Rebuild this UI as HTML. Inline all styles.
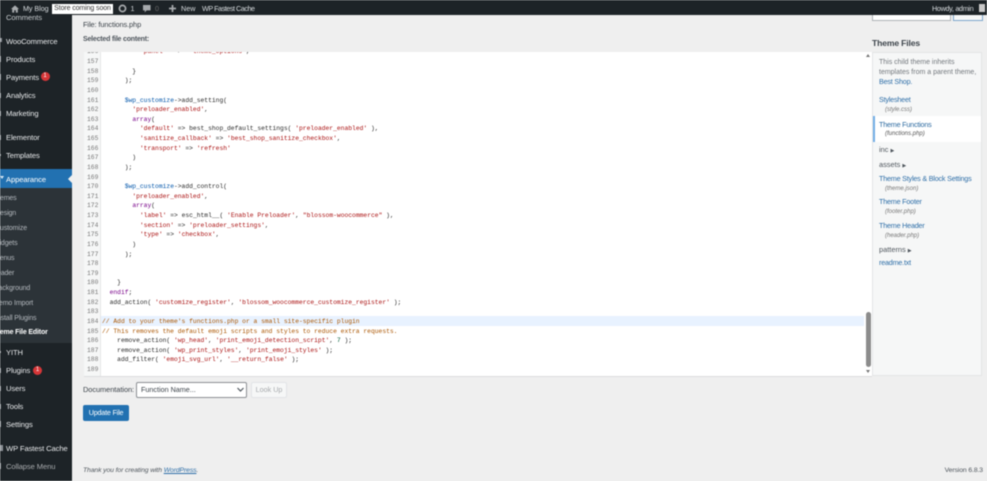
<!DOCTYPE html>
<html lang="en"><head><meta charset="utf-8"><title>Edit Themes</title>
<style>
html,body{margin:0;padding:0;width:987px;height:481px;overflow:hidden;background:#efefef}
#w{position:relative;width:987px;height:481px;overflow:hidden;background:#efefef;filter:blur(.45px);font-family:"Liberation Sans",sans-serif;font-size:8.3px;color:#3c434a}
#w div,#w svg{position:absolute}
.t{white-space:nowrap;line-height:10px}
.m{color:#e6e8ea;font-size:7.6px;letter-spacing:-.1px;left:6px;margin-top:.6px}
.s{color:#b4b9be;font-size:7px;letter-spacing:-.12px}
.l{color:#2f6fa8;left:879px;font-size:7.2px;letter-spacing:-.2px}
.f{color:#777;left:885px;font-size:6px;font-style:italic}
.g{color:#50575e;left:879px;font-size:7.4px}
.tb{color:#d5d9dc;font-size:7.2px;top:4px}
pre{margin:0;font-family:"Liberation Mono",monospace;font-size:6.32px;line-height:9.625px;position:absolute;color:#2a2a2a}
.k{color:#770088}.st{color:#aa1111}.v{color:#0055aa}.c{color:#aa5500}.n{color:#116644}
.ic{background:#8d9297}
</style></head><body><div id="w">

<!-- sidebar -->
<div style="left:0;top:0;width:72px;height:481px;background:#1d2327"></div>
<div style="left:0;top:187px;width:72px;height:156px;background:#2c3338"></div>
<div style="left:0;top:169px;width:72px;height:19px;background:#2271b1"></div>
<div style="left:68px;top:175px;width:0;height:0;border:4px solid transparent;border-right-color:#efefef;border-left:0"></div>

<div class="t m" style="top:12.5px;color:#c6cacd">Comments</div>
<div class="t m" style="top:36px">WooCommerce</div>
<div class="t m" style="top:54px">Products</div>
<div class="t m" style="top:72px">Payments</div>
<div style="left:40.500px;top:72.200px;width:9px;height:9px;border-radius:50%;background:#d63638;color:#fff;font-size:6px;line-height:9px;text-align:center">1</div>
<div class="t m" style="top:90px">Analytics</div>
<div class="t m" style="top:108px">Marketing</div>
<div class="t m" style="top:132px">Elementor</div>
<div class="t m" style="top:150px">Templates</div>
<div class="t m" style="top:174px;color:#fff">Appearance</div>

<div class="t s" style="top:194px;left:-8px">Themes</div>
<div class="t s" style="top:209px;left:-5px">Design</div>
<div class="t s" style="top:224px;left:-5px">Customize</div>
<div class="t s" style="top:239px;left:-7px">Widgets</div>
<div class="t s" style="top:254px;left:-6px">Menus</div>
<div class="t s" style="top:268.500px;left:-8px">Header</div>
<div class="t s" style="top:284px;left:-6px">Background</div>
<div class="t s" style="top:299px;left:-6px">Demo Import</div>
<div class="t s" style="top:313.500px;left:-5px">Install Plugins</div>
<div class="t s" style="top:328px;left:-8.500px;color:#fff;font-weight:bold;letter-spacing:-.15px">Theme File Editor</div>

<div class="t m" style="top:347px">YITH</div>
<div class="t m" style="top:365px">Plugins</div>
<div style="left:33px;top:366px;width:9px;height:9px;border-radius:50%;background:#d63638;color:#fff;font-size:6px;line-height:9px;text-align:center">1</div>
<div class="t m" style="top:383px">Users</div>
<div class="t m" style="top:401px">Tools</div>
<div class="t m" style="top:419px">Settings</div>
<div class="t m" style="top:443px">WP Fastest Cache</div>
<div class="t m" style="top:461px;color:#a7aaad">Collapse Menu</div>

<!-- clipped menu icons -->
<div class="ic" style="left:0;top:38px;width:2px;height:4px"></div>
<div class="ic" style="left:0;top:56px;width:1px;height:6px"></div>
<div class="ic" style="left:0;top:74px;width:1px;height:6px"></div>
<div class="ic" style="left:0;top:93px;width:1px;height:5px"></div>
<div class="ic" style="left:0;top:111px;width:1px;height:5px"></div>
<div class="ic" style="left:0;top:135px;width:1px;height:5px"></div>
<div class="ic" style="left:0;top:154px;width:1px;height:2px"></div>
<div style="left:0;top:176px;width:0;height:0;border:2px solid transparent;border-top:3px solid #dbe8f3;border-bottom:0"></div>
<div class="ic" style="left:0;top:351px;width:1px;height:2px"></div>
<div class="ic" style="left:0;top:368px;width:1px;height:5px"></div>
<div class="ic" style="left:0;top:386px;width:1px;height:5px"></div>
<div class="ic" style="left:0;top:404px;width:1px;height:5px"></div>
<div class="ic" style="left:0;top:421px;width:1px;height:6px"></div>
<div class="ic" style="left:0;top:445px;width:3px;height:6px"></div>
<div class="ic" style="left:0;top:463px;width:1px;height:6px"></div>

<!-- top right controls -->
<div style="left:872px;top:15px;width:77px;height:5px;background:#fff;border:1px solid #aeb2b6;border-top:0"></div>
<div style="left:953px;top:15px;width:28px;height:5px;background:#f6f7f7;border:1px solid #7da6cc;border-top:0"></div>

<!-- top bar -->
<div style="left:0;top:0;width:987px;height:15px;background:#1d2327"></div>
<svg style="left:11px;top:5px" width="8" height="8" viewBox="0 0 10 9"><path d="M5 0 0 4.500h1.500V9h2.500V6h2v3h2.500V4.500H10z" fill="#a7aaad"/></svg>
<div class="t tb" style="left:23px;letter-spacing:-.05px">My Blog</div>
<div style="left:52px;top:4px;width:61px;height:9.500px;background:#fff;color:#333;font-size:7px;letter-spacing:-.1px;line-height:9.500px;text-align:center;white-space:nowrap">Store coming soon</div>
<svg style="left:118px;top:4px" width="9" height="9" viewBox="0 0 9 9"><circle cx="4.500" cy="4.500" r="3.100" fill="none" stroke="#a7aaad" stroke-width="1.700"/></svg>
<div class="t tb" style="left:130.500px">1</div>
<svg style="left:143px;top:5px" width="8" height="8" viewBox="0 0 9 9"><path d="M0 0h8.500v6H4L2 8.500V6H0z" fill="#a7aaad"/></svg>
<div class="t tb" style="left:155px;color:#666">0</div>
<svg style="left:169px;top:5px" width="7" height="7" viewBox="0 0 8 8"><path d="M3 0h2v3h3v2H5v3H3V5H0V3h3z" fill="#a7aaad"/></svg>
<div class="t tb" style="left:181px">New</div>
<div class="t tb" style="left:202px;letter-spacing:-.45px">WP Fastest Cache</div>
<div class="t tb" style="left:932px;letter-spacing:-.3px">Howdy, admin</div>
<div style="left:979px;top:4px;width:6px;height:8px;background:#c9c9c9"></div>

<!-- header labels -->
<div class="t" style="left:83px;top:19.500px;font-size:7.400px;letter-spacing:-.1px;color:#3c434a">File: functions.php</div>
<div class="t" style="left:83px;top:34.500px;font-size:7px;letter-spacing:-.2px;color:#50575e;font-weight:bold">Selected file content:</div>

<!-- editor -->
<div style="left:84px;top:52px;width:788px;height:324px;background:#fff;overflow:hidden;border-bottom:1px solid #dcdcde">
<div style="left:0;top:0;width:16px;height:324px;background:#f6f7f7;border-right:1px solid #e6e6e6"></div>
<div style="left:17px;top:264px;width:763px;height:10px;background:#e8f2ff"></div>
<pre style="left:3px;top:-4.600px;color:#777">156
157
158
159
160
161
162
163
164
165
166
167
168
169
170
171
172
173
174
175
176
177
178
179
180
181
182
183
184
185
186
187
188
189</pre>
<pre style="left:18px;top:-4.600px">          <span class="st">'panel'</span>  =&gt;  <span class="st">'theme_options'</span>,

        }
      );

      <span class="v">$wp_customize</span>-&gt;add_setting(
        <span class="st">'preloader_enabled'</span>,
        <span class="k">array</span>(
          <span class="st">'default'</span> =&gt; best_shop_default_settings( <span class="st">'preloader_enabled'</span> ),
          <span class="st">'sanitize_callback'</span> =&gt; <span class="st">'best_shop_sanitize_checkbox'</span>,
          <span class="st">'transport'</span> =&gt; <span class="st">'refresh'</span>
        )
      );

      <span class="v">$wp_customize</span>-&gt;add_control(
        <span class="st">'preloader_enabled'</span>,
        <span class="k">array</span>(
          <span class="st">'label'</span> =&gt; esc_html__( <span class="st">'Enable Preloader'</span>, <span class="st">"blossom-woocommerce"</span> ),
          <span class="st">'section'</span> =&gt; <span class="st">'preloader_settings'</span>,
          <span class="st">'type'</span> =&gt; <span class="st">'checkbox'</span>,
        )
      );


    }
  <span class="k">endif</span>;
  add_action( <span class="st">'customize_register'</span>, <span class="st">'blossom_woocommerce_customize_register'</span> );

<span class="c">// Add to your theme's functions.php or a small site-specific plugin</span>
<span class="c">// This removes the default emoji scripts and styles to reduce extra requests.</span>
    remove_action( <span class="st">'wp_head'</span>, <span class="st">'print_emoji_detection_script'</span>, <span class="n">7</span> );
    remove_action( <span class="st">'wp_print_styles'</span>, <span class="st">'print_emoji_styles'</span> );
    add_filter( <span class="st">'emoji_svg_url'</span>, <span class="st">'__return_false'</span> );
</pre>
</div>

<!-- scrollbar -->
<div style="left:866px;top:312px;width:5px;height:55px;border-radius:3px;background:#8c8c8c"></div>
<div style="left:866px;top:54px;width:0;height:0;border:2.500px solid transparent;border-bottom:3px solid #777;border-top:0"></div>
<div style="left:866px;top:370px;width:0;height:0;border:2.500px solid transparent;border-top:3px solid #777;border-bottom:0"></div>

<!-- theme files -->
<div class="t" style="left:872px;top:38px;font-size:8.600px;letter-spacing:-.15px;font-weight:bold;color:#3c434a">Theme Files</div>
<div style="left:872px;top:52px;width:110px;height:324px;background:#f6f7f7;border:1px solid #e4e5e6;box-sizing:border-box"></div>
<div class="t" style="left:879px;top:58px;font-size:7px;color:#72777c">This child theme inherits</div>
<div class="t" style="left:879px;top:67.500px;font-size:7px;color:#72777c">templates from a parent theme,</div>
<div class="t l" style="top:77px">Best Shop.</div>
<div class="t l" style="top:95px">Stylesheet</div>
<div class="t f" style="top:105px">(style.css)</div>
<div style="left:873px;top:115.500px;width:108px;height:26px;background:#fff"></div>
<div style="left:873px;top:115.500px;width:1.500px;height:26px;background:#72aee6"></div>
<div class="t l" style="top:119.500px;color:#2c6aa0">Theme Functions</div>
<div class="t f" style="top:129px;color:#555">(functions.php)</div>
<div class="t g" style="top:145px">inc <span style="font-size:5px">&#9654;</span></div>
<div class="t g" style="top:160px">assets <span style="font-size:5px">&#9654;</span></div>
<div class="t l" style="top:174px">Theme Styles &amp; Block Settings</div>
<div class="t f" style="top:184px">(theme.json)</div>
<div class="t l" style="top:197px">Theme Footer</div>
<div class="t f" style="top:207px">(footer.php)</div>
<div class="t l" style="top:220.500px">Theme Header</div>
<div class="t f" style="top:230.500px">(header.php)</div>
<div class="t g" style="top:245px">patterns <span style="font-size:5px">&#9654;</span></div>
<div class="t l" style="top:258px">readme.txt</div>

<!-- docs -->
<div class="t" style="left:83px;top:384.500px;font-size:7.400px;letter-spacing:-.05px;color:#3c434a">Documentation:</div>
<div style="left:136px;top:382px;width:111px;height:15.500px;background:#fff;border:1px solid #8c8f94;border-radius:2px;box-sizing:border-box"></div>
<div class="t" style="left:141px;top:385px;font-size:7.200px;color:#3c434a">Function Name...</div>
<svg style="left:237px;top:387px" width="7" height="5" viewBox="0 0 7 5"><path d="M.5 1 3.500 4 6.500 1" fill="none" stroke="#50575e" stroke-width="1.200"/></svg>
<div style="left:251px;top:382px;width:36px;height:15.500px;background:#f6f7f7;border:1px solid #e2e4e7;border-radius:2px;box-sizing:border-box;color:#a7aaad;font-size:7.200px;line-height:14px;text-align:center">Look Up</div>
<div style="left:83px;top:404.500px;width:46px;height:16px;background:#2271b1;border-radius:2px;color:#fff;font-size:7.200px;letter-spacing:-.2px;line-height:16px;text-align:center;white-space:nowrap">Update File</div>

<!-- footer -->
<div class="t" style="left:83px;top:466px;font-size:6.800px;letter-spacing:-.1px;font-style:italic;color:#50575e">Thank you for creating with <span style="color:#2f6fa8;text-decoration:underline">WordPress</span>.</div>
<div class="t" style="right:4px;top:466px;font-size:6.800px;letter-spacing:-.1px;color:#50575e">Version 6.8.3</div>

</div></body></html>
